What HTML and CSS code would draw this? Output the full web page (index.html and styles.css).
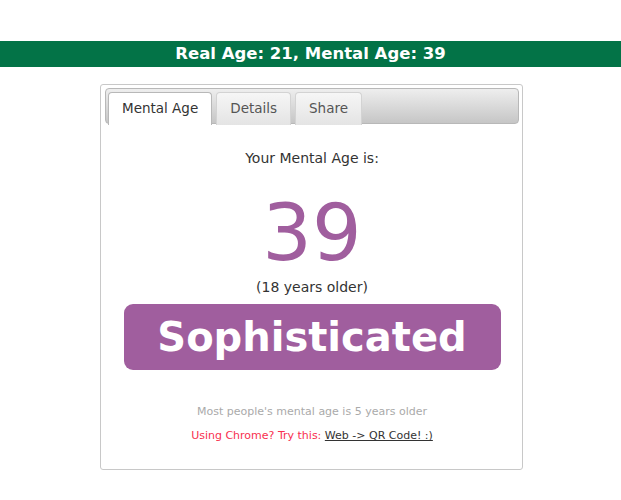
FILE: index.html
```html
<!DOCTYPE html>
<html lang="en">
<head>
    <meta charset="UTF-8">
    <title>Mental Age</title>
    <link rel="stylesheet" href="styles.css">
</head>
<body>

    <div class="result-bar">Real Age: 21, Mental Age: 39</div>

    <div class="card">
        <!-- Tabs -->
        <ul class="tabs">
            <li class="tab active">Mental Age</li>
            <li class="tab">Details</li>
            <li class="tab">Share</li>
        </ul>

        <div class="panel">
            <p class="label">Your Mental Age is:</p>
            <div class="age">39</div>
            <p class="diff">(18 years older)</p>
            <div class="badge">Sophisticated</div>
            <p class="note">Most people's mental age is 5 years older</p>
            <p class="promo">Using Chrome? Try this: <a href="#">Web -&gt; QR Code! :)</a></p>
        </div>
    </div>

</body>
</html>
```
FILE: styles.css
```css
* {
    box-sizing: border-box;
}

body {
    margin: 0;
    padding-top: 41px;
    font-family: "DejaVu Sans", Verdana, sans-serif;
    background-color: #fff;
    color: #333;
}

.result-bar {
    background-color: #037347;
    color: #fff;
    font-weight: bold;
    font-size: 16.5px;
    height: 26px;
    line-height: 26px;
    text-align: center;
}

.card {
    width: 423px;
    height: 386px;
    margin: 17px 0 0 100px;
    border: 1px solid #c8c8c8;
    border-radius: 3px;
    padding: 3px 3px 3px 4px;
}

/* Tab strip */
.tabs {
    list-style: none;
    margin: 0;
    padding: 3px 0 0 2px;
    display: flex;
    gap: 4px;
    height: 36px;
    border: 1px solid #b8b8b8;
    border-radius: 4px;
    background: linear-gradient(#eeeeee, #c6c6c6);
}

.tab {
    font-size: 13.5px;
    color: #555;
    padding: 0 13px;
    line-height: 30px;
    height: 33px;
    border: 1px solid #d3d3d3;
    border-bottom: none;
    border-radius: 4px 4px 0 0;
    background: linear-gradient(#f6f6f6, #e4e4e4);
}

.tab.active {
    background: #fff;
    color: #333;
    border-color: #b8b8b8;
}

.panel {
    text-align: center;
}

.label {
    font-size: 14px;
    margin: 26px 0 0;
}

.age {
    font-size: 78px;
    color: #a05e9e;
    line-height: 1;
    margin-top: 28px;
}

.diff {
    font-size: 14px;
    margin: 7px 0 0;
}

.badge {
    background-color: #a05e9e;
    color: #fff;
    font-weight: bold;
    font-size: 40px;
    width: 377px;
    height: 66px;
    line-height: 66px;
    margin: 9px auto 0;
    border-radius: 9px;
}

.note {
    font-size: 11px;
    color: #aaa;
    margin: 35px 0 0;
}

.promo {
    font-size: 11px;
    color: #f8304f;
    margin: 11px 0 0;
}

.promo a {
    color: #333;
}
```
